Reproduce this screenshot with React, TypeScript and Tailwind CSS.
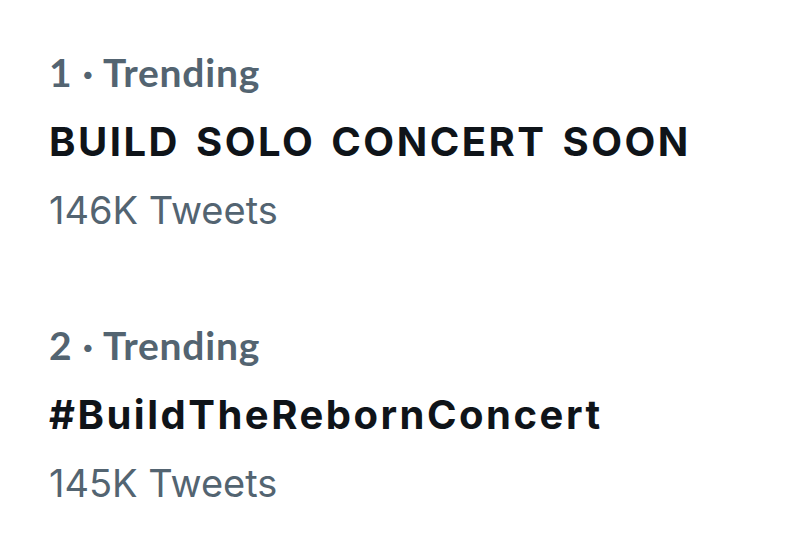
import React from 'react';

const trends = [
    { rank: 1, name: 'BUILD SOLO CONCERT SOON', count: '146K Tweets' },
    { rank: 2, name: '#BuildTheRebornConcert', count: '145K Tweets' },
];

export default function App() {
    return (
        <div className="w-[786px] h-[539px] bg-white overflow-hidden pl-[49px] pt-[38px] flex flex-col gap-[66px]">
            {trends.map(t => (
                <div key={t.rank} className="flex flex-col">
                    <div className="h-[69px] leading-[69px] text-[39px] font-bold tracking-[0.75px] text-[#536471] font-['Lato',sans-serif]">
                        {t.rank} · Trending
                    </div>
                    <div className="h-[69px] leading-[69px] text-[40px] font-bold tracking-[2.5px] [word-spacing:4px] text-[#0f1419] font-['Inter',sans-serif]">
                        {t.name}
                    </div>
                    <div className="h-[69px] leading-[69px] text-[38px] text-[#536471] font-['Inter',sans-serif]">
                        {t.count}
                    </div>
                </div>
            ))}
        </div>
    );
}
